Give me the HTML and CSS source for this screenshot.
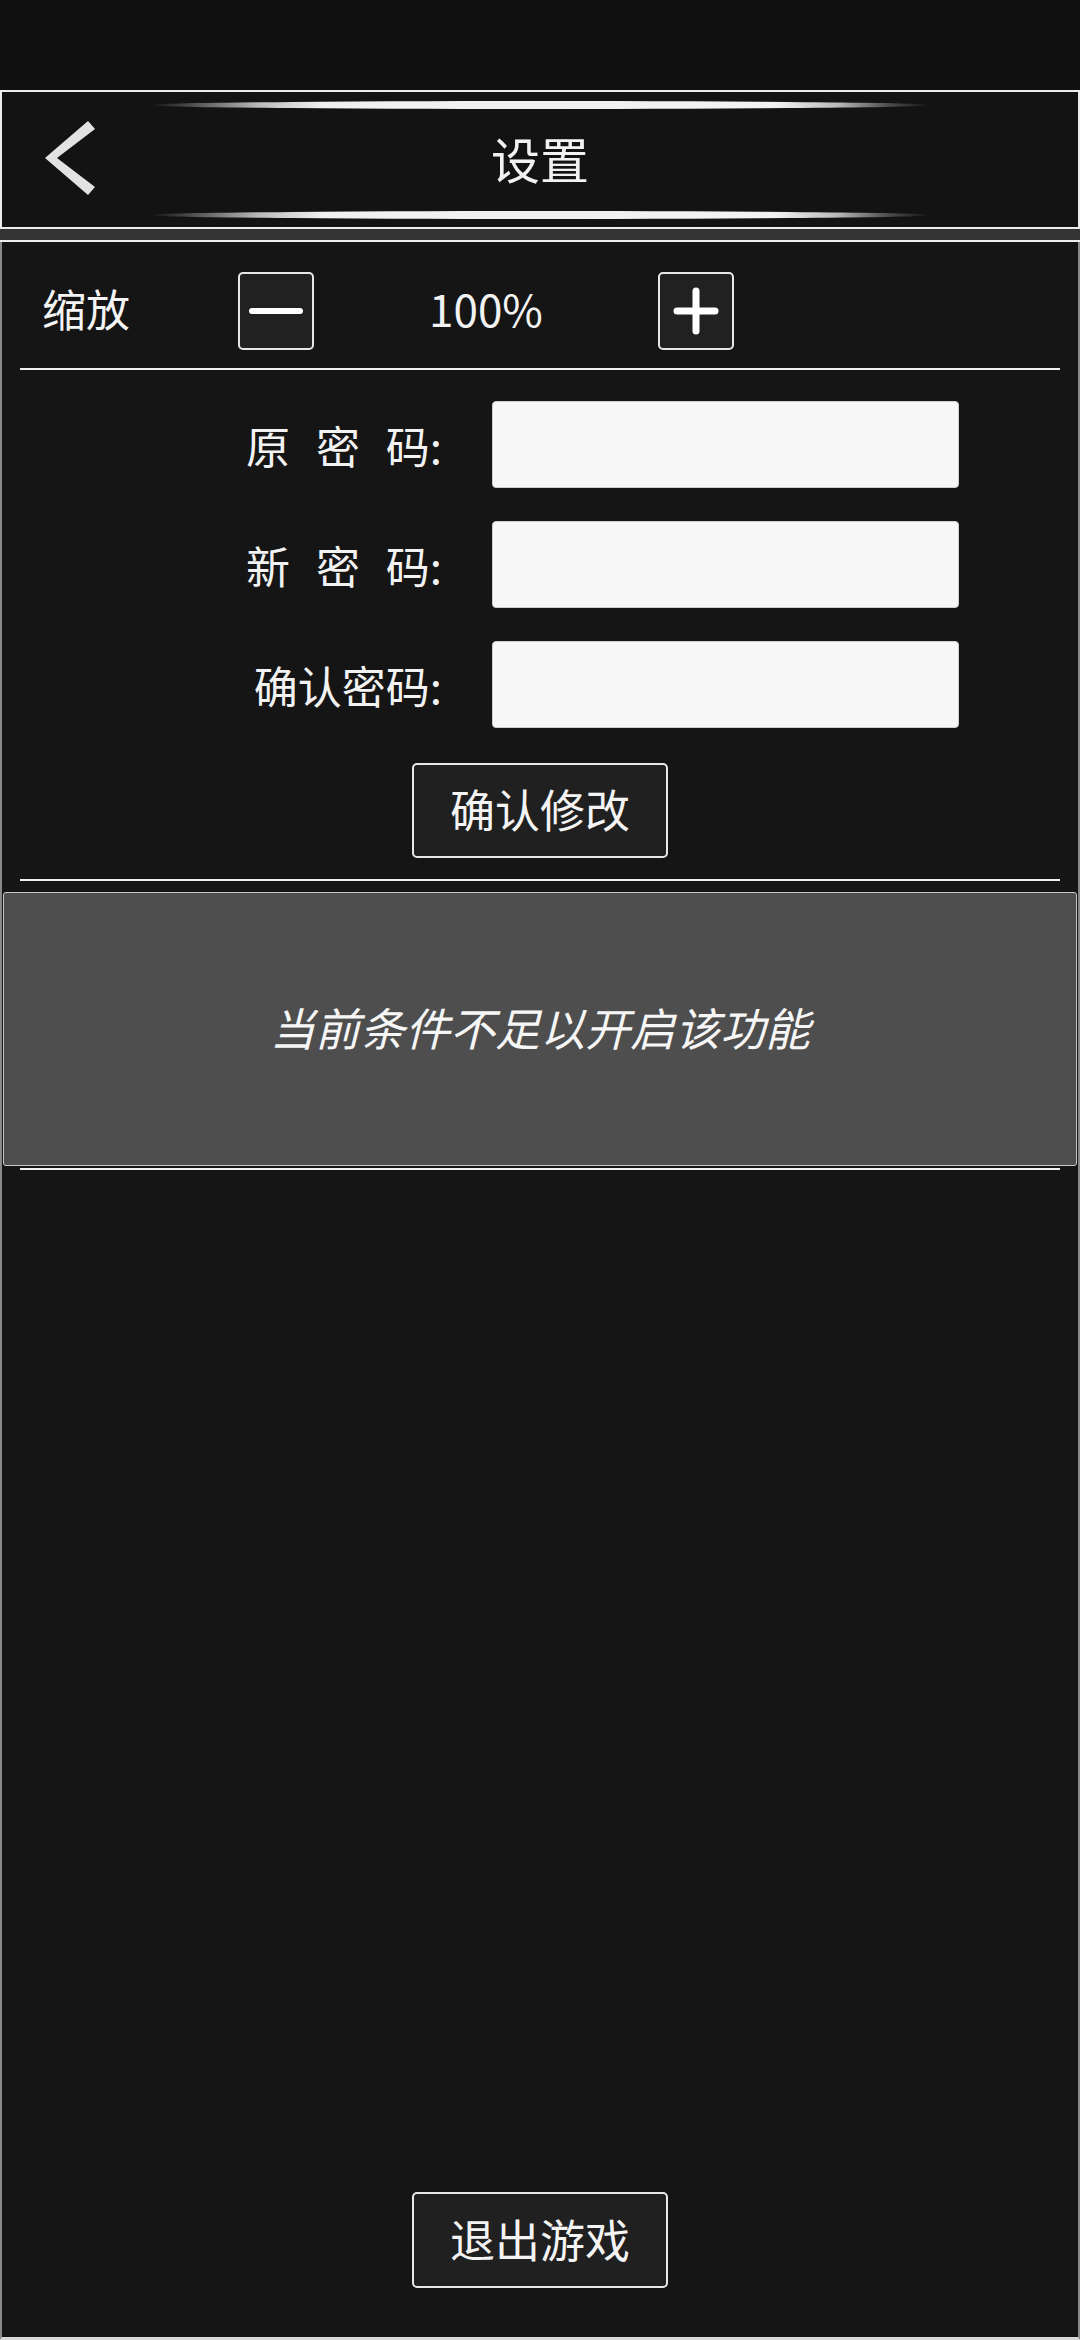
FILE: index.html
```html
<!DOCTYPE html>
<html lang="zh-CN">
<head>
<meta charset="utf-8">
<title>设置</title>
<link rel="stylesheet" href="styles.css">
</head>
<body>
<div class="page">
  <div class="status"></div>
  <header class="header">
    <div class="glow"></div>
    <div class="head-row">
      <div class="back">
        <svg width="60" height="80" viewBox="0 0 60 80">
          <polygon points="4,38 47,1 54,9 16,38 54,67 47,75" fill="#e2e2e2"/>
        </svg>
      </div>
      <div class="title">设置</div>
      <div></div>
    </div>
    <div class="glow"></div>
  </header>
  <div class="bar"></div>
  <main class="content">
    <div class="zoom-row">
      <div class="zoom-label">缩放</div>
      <button class="sq-btn" type="button">
        <svg width="72" height="74" viewBox="0 0 72 74"><line x1="12" y1="37" x2="60" y2="37" stroke="#fff" stroke-width="6" stroke-linecap="round"/></svg>
      </button>
      <div class="zoom-value">100%</div>
      <button class="sq-btn" type="button">
        <svg width="72" height="74" viewBox="0 0 72 74"><line x1="17" y1="37" x2="55" y2="37" stroke="#fff" stroke-width="7" stroke-linecap="round"/><line x1="36" y1="17" x2="36" y2="57" stroke="#fff" stroke-width="7" stroke-linecap="round"/></svg>
      </button>
    </div>
    <div class="sep"></div>
    <div class="pwd">
      <div class="pwd-row"><label class="pwd-label spaced">原 密 码:</label><div class="input"></div></div>
      <div class="pwd-row"><label class="pwd-label spaced">新 密 码:</label><div class="input"></div></div>
      <div class="pwd-row"><label class="pwd-label">确认密码:</label><div class="input"></div></div>
      <button class="btn confirm" type="button">确认修改</button>
    </div>
    <div class="sep"></div>
    <div class="panel">当前条件不足以开启该功能</div>
    <div class="sep sep-tight"></div>
    <button class="btn exit" type="button">退出游戏</button>
  </main>
</div>
</body>
</html>
```

FILE: styles.css
```css
* { box-sizing: border-box; }
html, body {
  margin: 0;
  padding: 0;
  background: #101010;
}
body {
  font-family: "Noto Sans CJK SC", "Noto Sans", sans-serif;
  color: #f4f4f4;
}
.page {
  width: 1080px;
  height: 2340px;
  display: flex;
  flex-direction: column;
}
.status {
  height: 90px;
  background: #101010;
  flex: none;
}
.header {
  flex: none;
  height: 139px;
  border: 2px solid #ececec;
  background: #131313;
  display: flex;
  flex-direction: column;
  padding: 9px 0 8px;
}
.glow {
  width: 780px;
  height: 8px;
  margin: 0 auto;
  border-radius: 50%;
  background: linear-gradient(90deg, rgba(255,255,255,0) 0%, #555 6%, #bbb 14%, #f0f0f0 22%, #f2f2f2 80%, #bbb 88%, #555 94%, rgba(255,255,255,0) 100%);
}
.head-row {
  flex: 1;
  display: grid;
  grid-template-columns: 1fr auto 1fr;
  align-items: center;
}
.back {
  padding-left: 39px;
  display: flex;
  align-items: center;
  height: 80px;
}
.back svg { display: block; }
.title {
  font-size: 49px;
  line-height: 1;
  color: #f2f2f2;
  padding-bottom: 5px;
}
.bar {
  flex: none;
  height: 13px;
  background: #333;
  border-bottom: 2px solid #eeeeee;
}
.content {
  flex: 1;
  background: #151515;
  border-left: 2px solid #8a8a8a;
  border-right: 2px solid #8a8a8a;
  border-bottom: 3px solid #d8d8d8;
  display: flex;
  flex-direction: column;
  align-items: stretch;
  padding-bottom: 49px;
}
.zoom-row {
  display: flex;
  align-items: center;
  padding: 30px 0 18px 40px;
}
.zoom-label {
  width: 196px;
  font-size: 44px;
  line-height: 72px;
  padding-bottom: 6px;
}
.sq-btn {
  width: 76px;
  height: 78px;
  padding: 0;
  margin: 0;
  border: 2px solid #e6e6e6;
  border-radius: 5px;
  background: #212121;
  display: flex;
  align-items: center;
  justify-content: center;
}
.sq-btn svg { display: block; }
.zoom-value {
  width: 344px;
  text-align: center;
  font-size: 44px;
  line-height: 72px;
  padding-bottom: 6px;
  color: #f2f2f2;
}
.sep {
  height: 2px;
  margin: 0 18px;
  background: #f0f0f0;
  flex: none;
}
.sep-tight { margin-top: 2px; }
.pwd {
  display: flex;
  flex-direction: column;
  align-items: center;
  padding: 31px 0 21px;
}
.pwd-row {
  width: 100%;
  display: flex;
  align-items: center;
  height: 87px;
  margin-bottom: 33px;
}
.pwd-row:nth-child(3) { margin-bottom: 35px; }
.pwd-label {
  width: 440px;
  text-align: right;
  font-size: 44px;
  line-height: 1;
  margin-right: 50px;
  color: #f2f2f2;
}
.spaced { word-spacing: 16px; }
.input {
  width: 467px;
  height: 87px;
  background: #f7f7f7;
  border: 1px solid #cfcfcf;
  border-radius: 4px;
}
.btn {
  width: 256px;
  height: 95px;
  border: 2px solid #e8e8e8;
  border-radius: 5px;
  background: #202020;
  color: #f4f4f4;
  font-family: "Noto Sans CJK SC", "Noto Sans", sans-serif;
  font-size: 45px;
  line-height: 1;
  padding: 0 0 4px;
  margin: 0;
}
.panel {
  margin: 11px 1px 0;
  height: 274px;
  background: #4e4e4e;
  border: 1px solid #c8c8c8;
  border-radius: 3px;
  display: flex;
  align-items: center;
  justify-content: center;
  font-size: 45px;
  font-style: italic;
  color: #f6f6f6;
  padding-bottom: 6px;
}
.exit {
  margin: auto auto 0;
  height: 96px;
}
```
